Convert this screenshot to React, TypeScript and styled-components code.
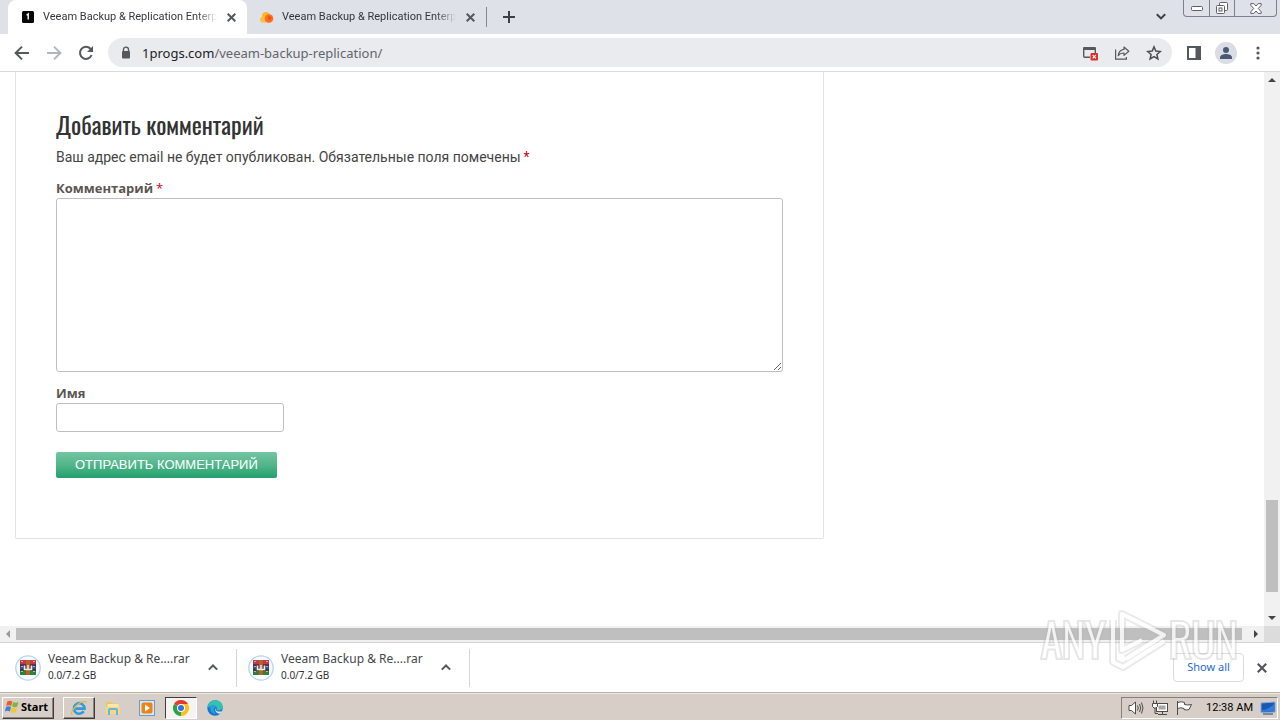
import React from "react";
import styled, { createGlobalStyle, css } from "styled-components";

const ui = `"Noto Sans", "Open Sans", sans-serif`;
const compact = `Roboto, "Noto Sans", sans-serif`;

const GlobalStyle = createGlobalStyle`
  *, *::before, *::after { box-sizing: border-box; }
  html, body { margin: 0; padding: 0; }
  body { font-family: ${ui}; background: #ffffff; overflow: hidden; }
  button, input, textarea { font: inherit; color: inherit; margin: 0; }
  svg { display: block; flex: none; }
`;

const Desktop = styled.div`
  position: relative;
  display: flex;
  flex-direction: column;
  height: 100vh;
`;

const IconButton = styled.button<{ $size?: number; $color?: string }>`
  display: flex;
  align-items: center;
  justify-content: center;
  flex: none;
  width: ${(p) => p.$size ?? 32}px;
  height: ${(p) => p.$size ?? 32}px;
  padding: 0;
  border: 0;
  border-radius: 50%;
  background: transparent;
  color: ${(p) => p.$color ?? "#55585c"};
`;

/* Tab strip */

const TabStrip = styled.header`
  display: flex;
  align-items: stretch;
  height: 34px;
  padding-left: 8px;
  background: #dee1e8;
`;

const Tab = styled.div<{ $active?: boolean }>`
  display: flex;
  align-items: center;
  width: 239px;
  padding: 0 8px 0 12px;
  border-radius: 8px 8px 0 0;
  background: ${(p) => (p.$active ? "#ffffff" : "transparent")};
  color: #33363b;
`;

const TabLabel = styled.button`
  display: flex;
  align-items: center;
  flex: 1;
  gap: 7px;
  min-width: 0;
  padding: 0;
  border: 0;
  background: transparent;
  text-align: left;
`;

const TabTitle = styled.span`
  flex: 1;
  overflow: hidden;
  margin-right: 6px;
  white-space: nowrap;
  font-family: ${compact};
  font-size: 11px;
  line-height: 16px;
  mask-image: linear-gradient(to right, #000 88%, transparent);
`;

const StripDivider = styled.span`
  align-self: center;
  width: 1px;
  height: 20px;
  background: #85888e;
`;

const NewTab = styled(IconButton)`
  margin-left: 5px;
`;

const StripSpacer = styled.span`
  flex: 1;
`;

const WindowControls = styled.div`
  display: flex;
  height: 17px;
  margin: 0 3px 0 6px;
  border: 1px solid #7c808a;
  border-top: 0;
  border-radius: 0 0 4px 4px;
`;

const WindowButton = styled.button<{ $wide?: boolean }>`
  display: flex;
  align-items: center;
  justify-content: center;
  width: ${(p) => (p.$wide ? 42 : 25)}px;
  padding: 0;
  border: 0;
  background: transparent;
  color: #5b5f69;
  & + & {
    border-left: 1px solid #7c808a;
  }
`;

/* Toolbar */

const Toolbar = styled.nav`
  display: flex;
  align-items: center;
  height: 38px;
  padding: 0 6px;
  border-bottom: 1px solid #d9dadc;
  background: #ffffff;
`;

const AddressBar = styled.div`
  display: flex;
  align-items: center;
  flex: 1;
  height: 29px;
  margin: 0 6px;
  padding: 0 2px 0 12px;
  border-radius: 15px;
  background: #e9ebee;
`;

const Address = styled.a`
  flex: 1;
  padding-left: 10px;
  font-size: 13px;
  line-height: 20px;
  color: #62656a;
  text-decoration: none;
`;

const Host = styled.span`
  color: #202226;
`;

const Avatar = styled.span`
  display: flex;
  align-items: center;
  justify-content: center;
  width: 22px;
  height: 22px;
  border-radius: 50%;
  background: #dadde3;
`;

/* Page viewport */

const Viewport = styled.div`
  display: grid;
  flex: 1;
  min-height: 0;
  grid-template-columns: minmax(0, 1fr) 16px;
  grid-template-rows: minmax(0, 1fr) 16px;
`;

const PageArea = styled.main`
  overflow: hidden;
  padding: 0 15px;
  background: #ffffff;
  font-family: "Open Sans", "Noto Sans", sans-serif;
`;

const Card = styled.section`
  max-width: 809px;
  padding: 36px 40px 60px;
  border: 1px solid #e3e3e3;
  border-top: 0;
  border-radius: 0 0 2px 2px;
`;

const Heading = styled.h3`
  margin: 0;
  font-family: Oswald, Roboto, sans-serif;
  font-size: 24px;
  font-weight: 400;
  line-height: 32px;
  color: #333333;
`;

const Note = styled.p`
  margin: 7px 0 0;
  font-family: ${compact};
  font-size: 14px;
  line-height: 20px;
  color: #444444;
`;

const Required = styled.span`
  margin-left: 3px;
  font-weight: 400;
  color: #d0021b;
`;

const Field = styled.div`
  display: flex;
  flex-direction: column;
  align-items: flex-start;
  margin-top: 11px;
`;

const Label = styled.label`
  font-size: 13px;
  font-weight: 700;
  line-height: 20px;
  color: #5b5650;
`;

const fieldBox = css`
  border: 1px solid #bfbfbf;
  border-radius: 3px;
  background: #ffffff;
  outline: 0;
`;

const CommentBox = styled.textarea`
  ${fieldBox}
  display: block;
  width: 100%;
  height: 174px;
  padding: 4px 8px;
`;

const NameBox = styled.input`
  ${fieldBox}
  width: 228px;
  height: 29px;
  padding: 4px 8px;
`;

const Submit = styled.button`
  display: block;
  height: 26px;
  margin-top: 20px;
  padding: 0 19px;
  border: 0;
  border-radius: 2px;
  background: linear-gradient(to bottom, #74c5a2, #52b58b 50%, #22a06c);
  font-family: "Liberation Sans", sans-serif;
  font-size: 13px;
  line-height: 26px;
  text-transform: uppercase;
  color: #ffffff;
`;

const Scrollbar = styled.div<{ $vertical?: boolean }>`
  display: flex;
  flex-direction: ${(p) => (p.$vertical ? "column" : "row")};
  background: #f1f1f1;
`;

const ScrollArrow = styled.button`
  display: flex;
  align-items: center;
  justify-content: center;
  flex: none;
  width: 16px;
  height: 16px;
  padding: 0;
  border: 0;
  background: transparent;
`;

const ScrollGap = styled.span<{ $share: number }>`
  flex: ${(p) => p.$share};
`;

const ScrollThumb = styled.span<{ $share: number; $vertical?: boolean }>`
  flex: ${(p) => p.$share};
  margin: ${(p) => (p.$vertical ? "0 2px" : "2px 0")};
  background: #bfbfbf;
`;

const ScrollCorner = styled.span`
  background: #dcdcdc;
`;

/* Downloads shelf */

const Shelf = styled.section`
  display: flex;
  align-items: center;
  height: 50px;
  padding-right: 8px;
  border-top: 1px solid #d5d6d8;
  background: #ffffff;
`;

const Download = styled.div<{ $first?: boolean }>`
  display: flex;
  align-items: center;
  width: ${(p) => (p.$first ? 237 : 233)}px;
  height: 38px;
  padding: 0 13px 0 ${(p) => (p.$first ? 15 : 11)}px;
  border-right: 1px solid #d3d4d7;
`;

const DownloadText = styled.div`
  flex: 1;
  padding: 0 0 2px 7px;
  white-space: nowrap;
`;

const FileName = styled.div`
  font-size: 12px;
  line-height: 16px;
  color: #44474c;
`;

const FileSize = styled.div`
  font-size: 10px;
  line-height: 16px;
  color: #303236;
`;

const ShowAll = styled.button`
  width: 71px;
  height: 29px;
  margin-right: 8px;
  padding: 0 0 2px;
  border: 1px solid #d9dbdf;
  border-radius: 4px;
  background: #ffffff;
  font-size: 11px;
  line-height: 16px;
  color: #1f6bcf;
`;

/* Taskbar */

const Taskbar = styled.footer`
  display: flex;
  align-items: center;
  height: 28px;
  padding: 2px 2px 0;
  border-top: 1px solid #b5b2ae;
  background: #d6cec7;
  box-shadow: inset 0 1px 0 #ece8e4;
`;

const bevel = css`
  border: 1px solid;
  border-color: #ffffff #3f3d3b #3f3d3b #ffffff;
  box-shadow: inset -1px -1px 0 #8a8580;
`;

const StartButton = styled.button`
  ${bevel}
  display: flex;
  align-items: center;
  gap: 1px;
  width: 52px;
  height: 22px;
  padding: 0 1px 2px;
  background: #d6cec7;
  font-size: 11px;
  font-weight: 700;
  color: #000000;
`;

const TaskList = styled.div`
  display: flex;
  flex: 1;
  gap: 2px;
  margin-left: 9px;
`;

const TaskButton = styled.button<{ $state?: "raised" | "pressed" }>`
  display: flex;
  align-items: center;
  justify-content: center;
  width: 32px;
  height: 22px;
  padding: 0;
  border: 0;
  background: transparent;
  ${(p) => p.$state === "raised" && bevel}
  ${(p) =>
    p.$state === "pressed" &&
    css`
      border: 1px solid;
      border-color: #3f3d3b #ffffff #ffffff #3f3d3b;
      background: #f6f4f2;
    `}
`;

const Tray = styled.div`
  display: flex;
  align-items: center;
  gap: 7px;
  height: 22px;
  padding: 0 1px 0 6px;
  border: 1px solid;
  border-color: #85807a #ffffff #ffffff #85807a;
`;

const Clock = styled.time`
  padding-left: 6px;
  font-family: ${compact};
  font-size: 11px;
  white-space: nowrap;
  color: #000000;
`;

const Watermark = styled.div`
  position: absolute;
  right: 40px;
  bottom: 44px;
  pointer-events: none;
`;

/* Icons */

const Cross = ({ size = 9, width = 2 }: { size?: number; width?: number }) => (
  <svg width={size} height={size} viewBox="0 0 9 9" stroke="currentColor" strokeWidth={width} fill="none">
    <path d="M.7.7l7.6 7.6M8.3.7L.7 8.3" />
  </svg>
);

const SiteIcon = () => (
  <svg width="16" height="16" viewBox="0 0 16 16">
    <rect x="2" y="2" width="12" height="12" rx="1.5" fill="#080808" />
    <path d="M6.600 6.300L8.200 5v5.500" fill="none" stroke="#fff" strokeWidth="1.4" />
  </svg>
);

const CloudIcon = () => (
  <svg width="16" height="16" viewBox="0 0 16 16">
    <circle cx="7" cy="7" r="4" fill="#fdb52b" />
    <path d="M1 10.5a3 3 0 0 1 3-3c3-1 5 1 6 6H4a3 3 0 0 1-3-3z" fill="#fdc23c" />
    <circle cx="10" cy="9.5" r="4.3" fill="#f8701f" />
    <circle cx="10.5" cy="9" r="2" fill="#f95012" />
  </svg>
);

const Arrow = ({ flip }: { flip?: boolean }) => (
  <svg width="16" height="16" viewBox="0 0 16 16" fill="none" stroke="currentColor" strokeWidth="2">
    <path d={flip ? "M1 8h13M8 1.6L14.4 8 8 14.4" : "M15 8H2M8 1.6L1.6 8 8 14.4"} />
  </svg>
);

const Reload = () => (
  <svg width="16" height="16" viewBox="0 0 16 16">
    <path d="M13.6 10A6 6 0 1 1 12.4 3.8L14 5.6" fill="none" stroke="currentColor" strokeWidth="2" />
    <path d="M15 1v6H9z" fill="currentColor" />
  </svg>
);

const Lock = () => (
  <svg width="12" height="14" viewBox="0 0 12 14">
    <rect x="2" y="5" width="8" height="7.5" rx="1" fill="#55585c" />
    <path d="M3.500 5.500V3.600a2.500 2.500 0 0 1 5 0v1.900" fill="none" stroke="#55585c" strokeWidth="1.4" />
  </svg>
);

const BlockedPopup = () => (
  <svg width="16" height="16" viewBox="0 0 16 16">
    <path d="M1.7 3v8.3a1 1 0 0 0 1 1H8M13.300 3v5" fill="none" stroke="#55585c" strokeWidth="1.4" />
    <path d="M1 5V3a1 1 0 0 1 1-1h11a1 1 0 0 1 1 1v2z" fill="#55585c" />
    <rect x="8.5" y="8" width="7.5" height="7.5" rx="1" fill="#d93025" />
    <path d="M10.7 10.2l3.1 3.1M13.8 10.2l-3.1 3.1" stroke="#fff" strokeWidth="1.2" />
  </svg>
);

const Share = () => (
  <svg width="16" height="16" viewBox="0 0 16 16" fill="none" stroke="#55585c" strokeWidth="1.2">
    <path d="M1.6 4.5v9.7h10.8V12" />
    <path d="M10 2l4.8 4.2L10 10.4V8c-2.800 0-4.500.8-5.800 2.700C4.600 7.500 6.500 4.800 10 4.400z" strokeLinejoin="round" />
  </svg>
);

const Star = () => (
  <svg width="16" height="16" viewBox="0 0 16 16" fill="none" stroke="#4b4e52" strokeWidth="1.5">
    <path d="M8 1.900l1.800 4.200 4.500.4-3.400 3 1 4.500L8 11.600 4.100 14l1-4.500-3.400-3 4.500-.4z" />
  </svg>
);

const SidePanel = () => (
  <svg width="14" height="14" viewBox="0 0 14 14">
    <rect x="1" y="1" width="12" height="12" fill="none" stroke="#55585c" strokeWidth="2" />
    <rect x="8.500" y="1" width="5" height="12" fill="#55585c" />
  </svg>
);

const Person = () => (
  <svg width="14" height="14" viewBox="0 0 14 14" fill="#4b5875">
    <circle cx="7" cy="4" r="3" />
    <path d="M1 13v-1.500C1 9 4.500 8 7 8s6 1 6 3.500V13z" />
  </svg>
);

const Dots = () => (
  <svg width="4" height="14" viewBox="0 0 4 14" fill="#55585c">
    <circle cx="2" cy="2" r="1.600" />
    <circle cx="2" cy="7" r="1.600" />
    <circle cx="2" cy="12" r="1.600" />
  </svg>
);

const Chevron = ({ up }: { up?: boolean }) => (
  <svg width="10" height="7" viewBox="0 0 10 7" fill="none" stroke="currentColor" strokeWidth="2">
    <path d={up ? "M.8 5.600L5 1.500l4.200 4.100" : "M.8 1.200L5 5.400l4.200-4.200"} />
  </svg>
);

const Triangle = ({ d, color = "#444" }: { d: string; color?: string }) => (
  <svg width="8" height="8" viewBox="0 0 8 8">
    <path d={d} fill={color} />
  </svg>
);

const Books = () => (
  <svg width="26" height="26" viewBox="0 0 26 26">
    <circle cx="13" cy="13" r="12.200" fill="#f8fbff" stroke="#b9d2f5" strokeWidth="1.300" />
    <rect x="5" y="5" width="16" height="5" fill="#c03a48" />
    <rect x="5" y="10" width="16" height="5" fill="#344ea8" />
    <rect x="5" y="15" width="16" height="5" fill="#2f8139" />
    <path d="M6 6.500h2M6 11.500h2M6 16.500h2M18 6.500h2M18 11.500h2M18 16.500h2" stroke="#d9b26a" strokeWidth="1.200" />
    <path d="M5 10h16M5 15h16" stroke="#2b1a28" />
    <rect x="11" y="5" width="4" height="15" fill="#b5602a" />
    <path d="M9.500 10.500v4h7v-4M13 10v4" fill="none" stroke="#f4ead8" strokeWidth="1.500" />
  </svg>
);

const WindowsFlag = () => (
  <svg width="16" height="16" viewBox="0 0 15 16">
    <path d="M2.800 2.500c2-1.200 3.500-1 5 0L6.700 7c-1.500-1-3.200-1-5 0z" fill="#ee5a2a" />
    <path d="M8.600 3c1.700.9 3.500.9 5.400 0l-1.200 4.500c-1.800 1-3.500.9-5.200 0z" fill="#79b83b" />
    <path d="M1.500 8c1.800-1 3.500-1 5 0l-1.100 4.500c-1.500-1-3.300-1-5 0z" fill="#3b82d6" />
    <path d="M7.300 8.500c1.700.9 3.400.9 5.200 0L11.300 13c-1.800 1-3.500.9-5.200 0z" fill="#f7c52c" />
  </svg>
);

const ExplorerE = () => (
  <svg width="18" height="18" viewBox="0 0 18 18" fill="none">
    <path d="M13.700 12.300A5.300 5.300 0 1 1 14.500 9.600H5.500" stroke="#319be0" strokeWidth="2.600" />
    <path d="M2.500 15.500C-.5 16 3 8.500 9 4.500c4-2.700 7.500-3 7-.5" stroke="#e9b941" strokeWidth="1.300" />
  </svg>
);

const Folder = () => (
  <svg width="18" height="18" viewBox="0 0 18 18">
    <path d="M2 3h5l1 1.500h6V14H2z" fill="#e9c765" />
    <path d="M3.500 5h11v9h-11z" fill="#fae9a6" />
    <path d="M2 8h14v7H2z" fill="#f4d981" />
    <path d="M5 16v-5q0-1 1-1h6q1 0 1 1v5" fill="none" stroke="#6cb4de" strokeWidth="2" />
  </svg>
);

const MediaPlayer = () => (
  <svg width="18" height="18" viewBox="0 0 18 18">
    <rect x="1.500" y="1.500" width="15" height="15" fill="#d5e8f8" stroke="#6e9cc9" />
    <rect x="3.500" y="3.500" width="11" height="11" rx="2" fill="#f1820f" />
    <path d="M7 5.500l5 3.500-5 3.500z" fill="#fff" />
  </svg>
);

const ChromeLogo = () => (
  <svg width="16" height="16" viewBox="0 0 16 16">
    <path d="M8 8L1.070 4A8 8 0 0 1 14.930 4z" fill="#e33b2e" />
    <path d="M8 8L14.930 4A8 8 0 0 1 8 16z" fill="#fbc116" />
    <path d="M8 8L8 16A8 8 0 0 1 1.070 4z" fill="#2da14c" />
    <path d="M8 4h6.930L11 10 8 16l3.500-6z" fill="#fbc116" />
    <circle cx="8" cy="8" r="4" fill="#fff" />
    <circle cx="8" cy="8" r="3" fill="#3474e0" />
  </svg>
);

const EdgeLogo = () => (
  <svg width="16" height="16" viewBox="0 0 16 16">
    <circle cx="8" cy="8" r="7.700" fill="#1577c9" />
    <path d="M.4 7.500C1 3 4.500.3 8.200.3c4.500 0 7.500 3 7.500 6.200 0 2.500-1.800 4-4 4-1.700 0-2.400-.7-2-1.400C10.800 6 6 3.500.4 7.500z" fill="#35c1b0" />
    <path d="M.3 8C3.500 4.300 8.500 5 9.600 7.500 6.500 6.500 5.500 11 9 13.500c-4 .5-6.500-3-5.500-6C2 7.500 1 7.600.3 8z" fill="#2a9de3" />
    <path d="M9.500 7.700c-1.800 1.300-.5 4.800 5 3.700l1-.4c-.5 1-1 1.700-2 2.600-4 .7-7.200-4.300-4-5.900z" fill="#d6e6ef" />
  </svg>
);

const Speaker = () => (
  <svg width="16" height="16" viewBox="0 0 16 16" fill="none" stroke="#4e4b49">
    <path d="M1 5.500h2.500L7.500 2v12l-4-3.500H1z" fill="#fff" />
    <path d="M9.500 5.500q1.500 2.500 0 5M11.500 4q2.500 4 0 8M13.500 2.500q3 5.500 0 11" />
  </svg>
);

const Network = () => (
  <svg width="18" height="16" viewBox="0 0 18 16" fill="none" stroke="#4e4b49">
    <rect x="5.500" y="3.500" width="11" height="8" fill="#fff" />
    <rect x="7.500" y="5.500" width="7" height="4" fill="#aaa6a3" stroke="none" />
    <path d="M7 14.500h9M11.500 11.500v3" />
    <path d="M2.500.5v3M5.500.5v3M1.500 3.500h5v3L5 8H3L1.500 6.500z" fill="#fff" />
    <path d="M4 8v5.500h3" />
  </svg>
);

const Flag = () => (
  <svg width="17" height="16" viewBox="0 0 17 16" stroke="#4e4b49">
    <path d="M1.500 1v14M1.500 2.500q4-1.500 7 0v2q3 1 7 0l-2.500 5q-3 1-5 0V8.500q-3-1.500-6.500 0z" fill="#fff" />
  </svg>
);

const Monitor = () => (
  <svg width="16" height="14" viewBox="0 0 16 14">
    <path d="M1 2l14-1v10L1 11.500z" fill="#1c55b2" stroke="#83a8db" />
    <path d="M2 9q6 0 12-6v7L2 11z" fill="#2f7ddb" />
    <path d="M3 13h10" stroke="#283f66" />
  </svg>
);

const playOutline = "M82 40V4l42 21-38 24M82 20v20l20-10M73 10v42l10 5 41-26";

const AnyRunMark = () => (
  <svg width="200" height="66" viewBox="0 0 200 66" opacity="0.8">
    <g fill="none" strokeLinejoin="round">
      <path d={playOutline} stroke="#b4b4b4" strokeOpacity=".35" strokeWidth="8" />
      <path d={playOutline} stroke="#ffffff" strokeWidth="4" />
    </g>
    <g
      fill="#ffffff"
      stroke="#b4b4b4"
      strokeOpacity=".4"
      strokeWidth="4"
      paintOrder="stroke"
      fontFamily="Oswald, Roboto, sans-serif"
      fontWeight="300"
      fontSize="44"
    >
      <text x="1" y="48">ANY</text>
      <text x="129" y="48">RUN</text>
    </g>
  </svg>
);

const downloads = ["first", "second"];

export default function App() {
  return (
    <Desktop>
      <GlobalStyle />
      <TabStrip>
        <Tab $active>
          <TabLabel>
            <SiteIcon />
            <TabTitle>Veeam Backup &amp; Replication Enterpr</TabTitle>
          </TabLabel>
          <IconButton $size={16} aria-label="Close tab">
            <Cross />
          </IconButton>
        </Tab>
        <Tab>
          <TabLabel>
            <CloudIcon />
            <TabTitle>Veeam Backup &amp; Replication Enterpr</TabTitle>
          </TabLabel>
          <IconButton $size={16} aria-label="Close tab">
            <Cross />
          </IconButton>
        </Tab>
        <StripDivider />
        <NewTab $size={34} $color="#3c3f44" aria-label="New tab">
          <svg width="12" height="12" viewBox="0 0 12 12" stroke="currentColor" strokeWidth="2">
            <path d="M6 0v12M0 6h12" />
          </svg>
        </NewTab>
        <StripSpacer />
        <IconButton $size={32} $color="#3c3f44" aria-label="Search tabs">
          <Chevron />
        </IconButton>
        <WindowControls>
          <WindowButton aria-label="Minimize">
            <svg width="12" height="5" viewBox="0 0 12 5">
              <rect x=".5" y=".5" width="11" height="4" rx="1" fill="#fff" stroke="currentColor" />
            </svg>
          </WindowButton>
          <WindowButton aria-label="Restore">
            <svg width="12" height="12" viewBox="0 0 12 12" fill="#fff" stroke="currentColor">
              <rect x="3.500" y=".5" width="8" height="8" rx="1" />
              <rect x=".5" y="3.500" width="8" height="8" rx="1" />
              <rect x="3" y="6" width="3" height="3" />
            </svg>
          </WindowButton>
          <WindowButton $wide aria-label="Close">
            <svg width="12" height="11" viewBox="0 0 12 11">
              <path
                d="M.8.6h3L6 3l2.200-2.400h3v1.600L8.300 5.500l2.900 3.300v1.600h-3L6 8l-2.200 2.400h-3V8.800l2.900-3.300L.8 2.200z"
                fill="#fff"
                stroke="currentColor"
              />
            </svg>
          </WindowButton>
        </WindowControls>
      </TabStrip>

      <Toolbar>
        <IconButton aria-label="Back">
          <Arrow />
        </IconButton>
        <IconButton $color="#b4b6b9" aria-label="Forward">
          <Arrow flip />
        </IconButton>
        <IconButton aria-label="Reload">
          <Reload />
        </IconButton>
        <AddressBar>
          <Lock />
          <Address href="#page">
            <Host>1progs.com</Host>/veeam-backup-replication/
          </Address>
          <IconButton aria-label="Pop-ups blocked">
            <BlockedPopup />
          </IconButton>
          <IconButton aria-label="Share">
            <Share />
          </IconButton>
          <IconButton aria-label="Bookmark">
            <Star />
          </IconButton>
        </AddressBar>
        <IconButton aria-label="Side panel">
          <SidePanel />
        </IconButton>
        <IconButton aria-label="Profile">
          <Avatar>
            <Person />
          </Avatar>
        </IconButton>
        <IconButton aria-label="Menu">
          <Dots />
        </IconButton>
      </Toolbar>

      <Viewport>
        <PageArea id="page">
          <Card>
            <Heading>Добавить комментарий</Heading>
            <Note>
              Ваш адрес email не будет опубликован. Обязательные поля помечены<Required>*</Required>
            </Note>
            <Field>
              <Label htmlFor="comment">
                Комментарий<Required>*</Required>
              </Label>
              <CommentBox id="comment" />
            </Field>
            <Field>
              <Label htmlFor="author">Имя</Label>
              <NameBox id="author" type="text" />
            </Field>
            <Submit type="submit">Отправить комментарий</Submit>
          </Card>
        </PageArea>
        <Scrollbar $vertical>
          <ScrollArrow aria-label="Scroll up">
            <Triangle d="M0 6l4-4 4 4z" />
          </ScrollArrow>
          <ScrollGap $share={412} />
          <ScrollThumb $vertical $share={92} />
          <ScrollGap $share={18} />
          <ScrollArrow aria-label="Scroll down">
            <Triangle d="M0 2l4 4 4-4z" />
          </ScrollArrow>
        </Scrollbar>
        <Scrollbar>
          <ScrollArrow aria-label="Scroll left">
            <Triangle d="M6 0L2 4l4 4z" color="#9a9a9a" />
          </ScrollArrow>
          <ScrollThumb $share={1226} />
          <ScrollGap $share={6} />
          <ScrollArrow aria-label="Scroll right">
            <Triangle d="M2 0l4 4-4 4z" />
          </ScrollArrow>
        </Scrollbar>
        <ScrollCorner />
      </Viewport>

      <Shelf>
        {downloads.map((id, index) => (
          <Download key={id} $first={index === 0}>
            <Books />
            <DownloadText>
              <FileName>Veeam Backup &amp; Re....rar</FileName>
              <FileSize>0.0/7.2 GB</FileSize>
            </DownloadText>
            <IconButton $size={20} aria-label="Download options">
              <Chevron up />
            </IconButton>
          </Download>
        ))}
        <StripSpacer />
        <ShowAll>Show all</ShowAll>
        <IconButton $size={20} aria-label="Close downloads">
          <Cross size={10} />
        </IconButton>
      </Shelf>

      <Taskbar>
        <StartButton>
          <WindowsFlag />
          Start
        </StartButton>
        <TaskList>
          <TaskButton $state="raised" aria-label="Internet Explorer">
            <ExplorerE />
          </TaskButton>
          <TaskButton aria-label="File Explorer">
            <Folder />
          </TaskButton>
          <TaskButton aria-label="Media Player">
            <MediaPlayer />
          </TaskButton>
          <TaskButton $state="pressed" aria-label="Chrome">
            <ChromeLogo />
          </TaskButton>
          <TaskButton aria-label="Edge">
            <EdgeLogo />
          </TaskButton>
        </TaskList>
        <Tray>
          <Speaker />
          <Network />
          <Flag />
          <Clock>12:38 AM</Clock>
          <Monitor />
        </Tray>
      </Taskbar>

      <Watermark>
        <AnyRunMark />
      </Watermark>
    </Desktop>
  );
}
